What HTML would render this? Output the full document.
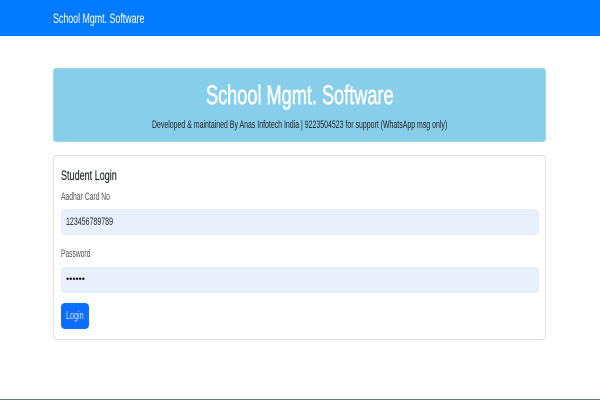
<!DOCTYPE html>
<html><head><meta charset="utf-8"><style>
html,body{margin:0;padding:0;width:600px;height:400px;overflow:hidden;background:#fff;font-family:"Liberation Sans",sans-serif}
.a{position:absolute;box-sizing:border-box}
.t{position:absolute;white-space:nowrap;transform-origin:0 50%;line-height:20px;height:20px}
</style></head><body>
<div class="a" style="left:0;top:0;width:600px;height:36px;background:#007bff"></div>
<div class="t" style="left:53px;top:9px;font-size:13.5px;color:#fff;transform:scaleX(.655)">School Mgmt. Software</div>
<div class="a" style="left:53px;top:68px;width:493px;height:74px;background:#87ceeb;border:1px solid #9ad6ee;border-radius:3px"></div>
<div class="t" style="left:206px;top:85px;font-size:27px;color:#fff;-webkit-text-stroke:.6px #fff;transform:scaleX(.672)">School Mgmt. Software</div>
<div class="t" style="left:152px;top:114.5px;font-size:11px;color:#212529;transform:scaleX(.633)">Developed &amp; maintained By Anas Infotech India | 9223504523 for support (WhatsApp msg only)</div>
<div class="a" style="left:53px;top:155px;width:493px;height:185px;background:#fff;border:1px solid #e2e2e2;border-radius:4px"></div>
<div class="t" style="left:61px;top:166px;font-size:13.5px;color:#212529;-webkit-text-stroke:.15px #212529;transform:scaleX(.67)">Student Login</div>
<div class="t" style="left:61px;top:187px;font-size:11px;color:#555;transform:scaleX(.615)">Aadhar Card No</div>
<div class="a" style="left:61px;top:209px;width:478px;height:26px;background:#e8f0fe;border:1px solid #e8edf5;border-radius:4px"></div>
<div class="t" style="left:66px;top:212px;font-size:11px;color:#212529;transform:scaleX(.64)">123456789789</div>
<div class="t" style="left:61px;top:244px;font-size:11px;color:#555;transform:scaleX(.607)">Password</div>
<div class="a" style="left:61px;top:267px;width:478px;height:26px;background:#e8f0fe;border:1px solid #e8edf5;border-radius:4px"></div>
<div class="t" style="left:66px;top:270px;font-size:9.5px;color:#111;transform:scaleX(.95)">••••••</div>
<div class="a" style="left:61px;top:303px;width:28px;height:26px;background:#0d6efd;border-radius:4px"></div>
<div class="t" style="left:66px;top:306px;font-size:11px;color:#fff;opacity:.8;transform:scaleX(.655)">Login</div>
<div class="a" style="left:0;top:399px;width:600px;height:1px;background:#6c757d"></div>
</body></html>
